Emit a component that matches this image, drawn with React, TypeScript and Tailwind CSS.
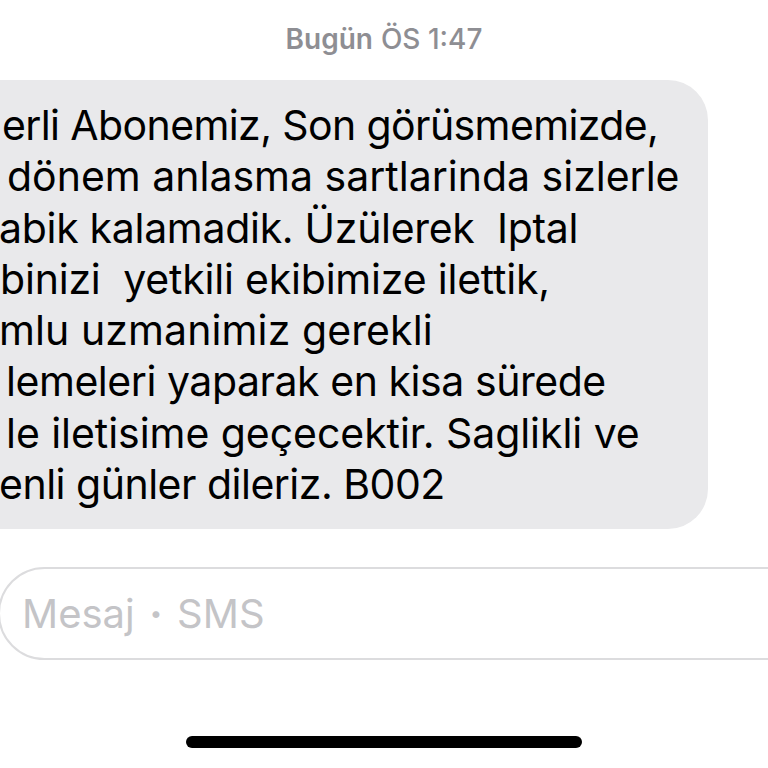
const lines: { text: string; cls: string }[] = [
  { text: "erli Abonemiz, Son görüsmemizde,", cls: "ml-[2px] tracking-[-0.6px]" },
  { text: "dönem anlasma sartlarinda sizlerle", cls: "ml-[7px] tracking-[0px]" },
  { text: "abik kalamadik. Üzülerek  Iptal", cls: "ml-[-1px] tracking-[-0.3px]" },
  { text: "binizi  yetkili ekibimize ilettik,", cls: "ml-[0px] tracking-[-0.2px]" },
  { text: "mlu uzmanimiz gerekli", cls: "ml-[-1px] tracking-[0.1px]" },
  { text: "lemeleri yaparak en kisa sürede", cls: "ml-[6px] tracking-[-0.45px]" },
  { text: "le iletisime geçecektir. Saglikli ve", cls: "ml-[6px] tracking-[-0.05px]" },
  { text: "enli günler dileriz. B002", cls: "ml-[-1px] tracking-[-0.5px]" },
];

export default function App() {
  return (
    <div className="flex h-[768px] w-[768px] flex-col overflow-hidden bg-white font-['Inter',sans-serif]">
      {/* timestamp */}
      <div className="mt-[22px] text-center text-[28px] leading-[34px] text-[#8e8e93]">
        <span className="font-semibold">Bugün</span>{" "}
        <span className="font-medium">ÖS 1:47</span>
      </div>

      {/* received bubble, cropped on the left */}
      <div className="mr-[60px] ml-[-40px] mt-[24px] rounded-[40px] bg-[#e9e9eb] pt-[20px] pb-[19px] pl-[40px]">
        {lines.map((l) => (
          <div
            key={l.text}
            className={`${l.cls} whitespace-pre text-[41px] leading-[51.3px] text-black`}
          >
            {l.text}
          </div>
        ))}
      </div>

      {/* message field */}
      <div className="mt-[38px] ml-[-2px] mr-[-60px] flex h-[93px] items-center rounded-full border-2 border-[#dcdcde] pl-[22px]">
        <span className="flex items-center text-[40px] text-[#c4c4c7]">
          Mesaj
          <span className="mx-[15px] text-[22px]">•</span>
          SMS
        </span>
      </div>

      {/* home indicator */}
      <div className="mt-[76px] flex justify-center">
        <div className="h-[12px] w-[396px] rounded-full bg-black" />
      </div>
    </div>
  );
}
